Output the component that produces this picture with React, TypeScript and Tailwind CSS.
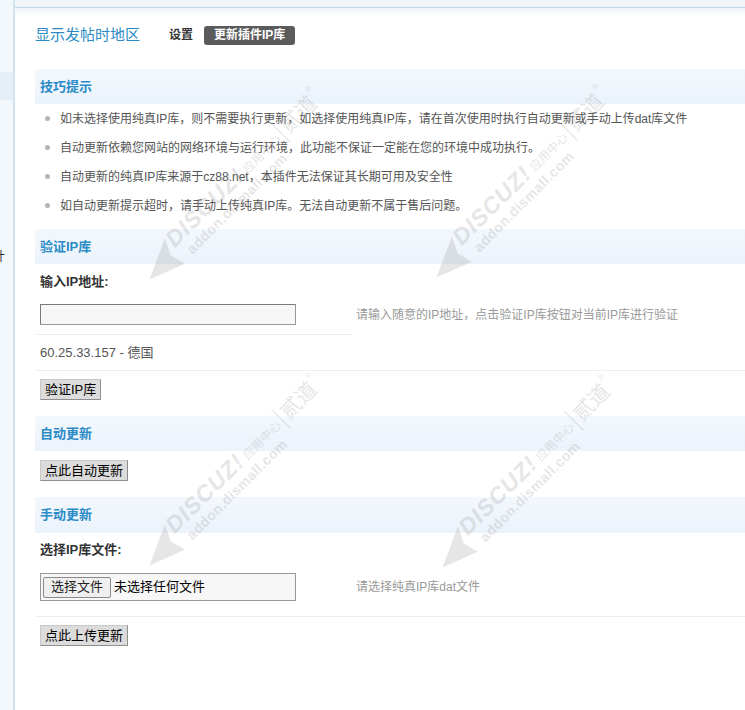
import React from 'react';

const tips = [
  '如未选择使用纯真IP库，则不需要执行更新，如选择使用纯真IP库，请在首次使用时执行自动更新或手动上传dat库文件',
  '自动更新依赖您网站的网络环境与运行环境，此功能不保证一定能在您的环境中成功执行。',
  '自动更新的纯真IP库来源于cz88.net，本插件无法保证其长期可用及安全性',
  '如自动更新提示超时，请手动上传纯真IP库。无法自动更新不属于售后问题。',
];

// tip of the paper-plane mark for each stamp
const stamps = [
  { x: 148, y: 278 },
  { x: 435, y: 276 },
  { x: 148, y: 564 },
  { x: 441, y: 566 },
];

function SectionHeader({ title, className = '' }: { title: string; className?: string }) {
  return (
    <div className={`flex items-center pl-[5px] bg-gradient-to-b from-[#f3f8fd] to-[#ebf3fb] ${className}`}>
      <span className="text-[13px] font-bold text-[#2b8bc6]">{title}</span>
    </div>
  );
}

function GrayButton({ children }: { children: React.ReactNode }) {
  return (
    <button className="h-[21px] px-[4px] bg-[#dcdcdc] border border-[#8f8f8f] border-t-[#c8c8c8] border-l-[#c8c8c8] text-[13px] leading-none text-black">
      {children}
    </button>
  );
}

function Stamp({ x, y }: { x: number; y: number }) {
  return (
    <svg
      className="absolute pointer-events-none overflow-visible"
      style={{ left: x, top: y - 240 }}
      width={260}
      height={260}
    >
      <g transform="translate(0,240) rotate(-45)" fill="#9a9a9a" opacity={0.24}>
        <polygon points="0,2 40,-16 32,0 36,16" />
        <text x={40} y={-2} fontSize={23} fontWeight={700} fontStyle="italic" letterSpacing={1} fontFamily="Liberation Sans, sans-serif">
          DISCUZ!
        </text>
        <text x={144} y={-3} fontSize={12} fontFamily="Noto Sans CJK SC, sans-serif">
          应用中心
        </text>
        <rect x={196} y={-22} width={1.2} height={27} />
        <text x={201} y={-2} fontSize={21} fontFamily="Noto Sans CJK SC, sans-serif">
          贰道
        </text>
        <text x={244} y={-18} fontSize={8} fontFamily="Liberation Sans, sans-serif">
          ®
        </text>
        <text x={48} y={15} fontSize={14} fontWeight={700} letterSpacing={0.5} fontFamily="Liberation Sans, sans-serif">
          addon.dismall.com
        </text>
      </g>
    </svg>
  );
}

export default function App() {
  return (
    <div className="relative flex w-[745px] h-[710px] overflow-hidden bg-white text-[12px] font-['Liberation_Sans','Noto_Sans_CJK_SC',sans-serif]">
      {/* collapsed left menu */}
      <aside className="w-[15px] shrink-0 overflow-hidden bg-[#f3f8fc] border-r-2 border-[#d2e3f0]">
        <div className="h-[72px]" />
        <div className="h-[28px] bg-[#e4eff8]" />
        <div className="mt-[149px] -ml-[7px] text-[12px] leading-[16px] text-[#333]">计</div>
      </aside>

      <main className="flex-1 flex flex-col">
        <div className="h-[8px] bg-[#f2f6fa] border-b border-[#c3d6e6]" />
        <div className="h-[8px] bg-gradient-to-b from-[#eef4f9] to-white" />

        {/* title + tabs */}
        <div className="h-[38px] flex items-center pl-[20px]">
          <span className="text-[15px] text-[#2b8bc6]">显示发帖时地区</span>
          <span className="ml-[29px] font-bold text-[#333]">设置</span>
          <span className="ml-[11px] h-[19px] px-[10px] flex items-center rounded-[3px] bg-[#5b5b5b] font-bold text-white">
            更新插件IP库
          </span>
        </div>

        <div className="ml-[20px] mt-[15px] flex flex-col">
          <SectionHeader title="技巧提示" className="h-[35px]" />
          <ul className="pb-[9px]">
            {tips.map((t) => (
              <li key={t} className="h-[29px] flex items-center pl-[10px] text-[#555]">
                <span className="w-[5px] h-[5px] rounded-full bg-[#b5b5b5]" />
                <span className="ml-[10px]">{t}</span>
              </li>
            ))}
          </ul>

          <SectionHeader title="验证IP库" className="h-[35px]" />
          <div className="h-[36px] flex items-center pl-[5px] text-[13px] font-bold text-[#333]">输入IP地址:</div>
          <div className="flex">
            <div className="w-[317px] pl-[5px] pt-[4px] pb-[9px] border-b border-[#eeeeee]">
              <input
                className="block w-[256px] h-[21px] bg-[#f7f7f7] border border-[#999] border-t-[#7a7a7a] border-l-[#7a7a7a] outline-none"
                defaultValue=""
              />
            </div>
            <div className="pl-[4px] pt-[4px] h-[25px] flex items-center text-[#999]">
              请输入随意的IP地址，点击验证IP库按钮对当前IP库进行验证
            </div>
          </div>
          <div className="h-[36px] flex items-center pl-[5px] text-[13px] text-[#555] border-b border-[#eeeeee]">
            60.25.33.157 - 德国
          </div>
          <div className="pl-[5px] pt-[8px] pb-[16px]">
            <GrayButton>验证IP库</GrayButton>
          </div>

          <SectionHeader title="自动更新" className="h-[35px]" />
          <div className="pl-[5px] pt-[9px] pb-[16px]">
            <GrayButton>点此自动更新</GrayButton>
          </div>

          <SectionHeader title="手动更新" className="h-[36px]" />
          <div className="h-[34px] flex items-center pl-[5px] text-[13px] font-bold text-[#333]">选择IP库文件:</div>
          <div className="flex border-b border-[#eeeeee]">
            <div className="w-[317px] pl-[5px] pt-[6px] pb-[15px]">
              <div className="w-[256px] h-[28px] flex items-center bg-[#f7f7f7] border border-[#999] pl-[2px]">
                <span className="h-[21px] px-[7px] flex items-center rounded-[2px] border border-[#8a8a8a] bg-[#efefef] text-[13px] text-[#222]">
                  选择文件
                </span>
                <span className="ml-[3px] text-[13px] text-black">未选择任何文件</span>
              </div>
            </div>
            <div className="pl-[4px] pt-[6px] h-[34px] flex items-center text-[#999]">请选择纯真IP库dat文件</div>
          </div>
          <div className="pl-[5px] pt-[8px]">
            <GrayButton>点此上传更新</GrayButton>
          </div>
        </div>
      </main>

      {stamps.map((s) => (
        <Stamp key={`${s.x}-${s.y}`} x={s.x} y={s.y} />
      ))}
    </div>
  );
}
